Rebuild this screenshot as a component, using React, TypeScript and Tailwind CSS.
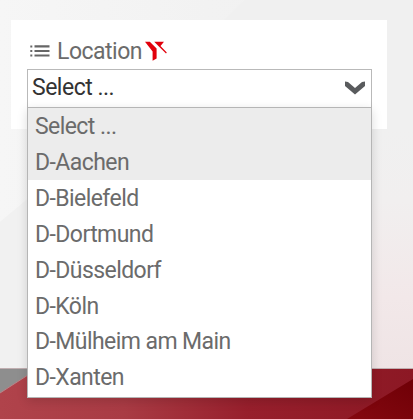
const locations = [
  'Select ...',
  'D-Aachen',
  'D-Bielefeld',
  'D-Dortmund',
  'D-Düsseldorf',
  'D-Köln',
  'D-Mülheim am Main',
  'D-Xanten',
];

function Backdrop() {
  return (
    <svg className="absolute inset-0 h-full w-full" viewBox="0 0 413 419" preserveAspectRatio="none" aria-hidden="true">
      <defs>
        <linearGradient id="wall" x1="0" y1="0" x2="1" y2="0">
          <stop offset="0" stopColor="#f6f6f6" />
          <stop offset="0.5" stopColor="#f2f2f2" />
          <stop offset="1" stopColor="#f0f0f0" />
        </linearGradient>
        <linearGradient id="side" x1="0" y1="0" x2="0" y2="1">
          <stop offset="0" stopColor="#f0f0f0" />
          <stop offset="0.3" stopColor="#f1efef" />
          <stop offset="0.7" stopColor="#f2e8e9" />
          <stop offset="1" stopColor="#efe4e5" />
        </linearGradient>
        <linearGradient id="floor" x1="0" y1="0" x2="1" y2="0">
          <stop offset="0" stopColor="#b0434b" />
          <stop offset="0.3" stopColor="#a93b44" />
          <stop offset="0.6" stopColor="#971f2c" />
          <stop offset="1" stopColor="#8c1824" />
        </linearGradient>
        <linearGradient id="corner" x1="0" y1="1" x2="1" y2="0">
          <stop offset="0" stopColor="#850810" />
          <stop offset="1" stopColor="#6f0006" />
        </linearGradient>
      </defs>
      <rect width="413" height="419" fill="url(#wall)" />
      <path d="M245 0H413V140H100Z" fill="#f0f0f0" />
      <path d="M0 222L50 180V369H0Z" fill="#f1f1f1" />
      <rect x="370" y="129" width="43" height="240" fill="url(#side)" />
      <rect y="369" width="413" height="50" fill="url(#floor)" />
      <path d="M0 369H37L0 393Z" fill="#8e8e8e" />
      <path d="M0 393L28 375" stroke="#b98488" strokeWidth="1" />
      <path d="M413 379L347 419H413Z" fill="url(#corner)" />
      <path d="M0 368.5H413" stroke="#c0aeb0" strokeWidth="1" />
    </svg>
  );
}

function ListIcon() {
  return (
    <svg className="h-3 w-5" viewBox="0 0 20 12" fill="#666" aria-hidden="true">
      <path d="M.3 .5h2v2h-2zM.3 5h2v2h-2zM.3 9.5h2v2h-2zM4.5 .3H19.5v2.1H4.5zM4.5 4.9H19.5v2.1H4.5zM4.5 9.4H19.5v2.1H4.5z" />
    </svg>
  );
}

function FilterOffIcon() {
  return (
    <svg className="h-5 w-[22px]" viewBox="0 0 22 20" aria-hidden="true">
      <path d="M0 .7H4.8L11.6 7.4V17.6L7.6 19.8V10.4Z" fill="#e1000c" />
      <path d="M9.2 .7H19L15.5 5L21.8 11.6L21 12.4L14.4 5.9Z" fill="#e1000c" />
    </svg>
  );
}

export default function App() {
  return (
    <main className="relative h-[419px] w-[413px] overflow-hidden pt-5 pl-[11px] font-['Roboto',sans-serif] text-[23px] text-[#6b6b6b]">
      <Backdrop />
      <section className="relative h-[109px] w-[376px] bg-white pt-4 pl-4">
        <div className="flex h-[33px] items-center pb-[4px] pl-[3px]">
          <ListIcon />
          <span className="ml-[7px] pt-[2px] leading-7 tracking-[-0.5px]">Location</span>
          <span className="ml-[3px]">
            <FilterOffIcon />
          </span>
        </div>
        <div className="relative w-[345px]">
          <button type="button" className="flex h-[39px] w-full items-center justify-between border border-[#b9b9b9] bg-white pr-[6px] pb-px pl-1 text-[#333]">
            <span className="tracking-[-0.5px]">Select ...</span>
            <svg className="h-[14px] w-5" viewBox="0 0 20 14" aria-hidden="true">
              <path d="M0 .5L3 1L10 7L17 1L20 .5V5L10 13.5L0 5Z" fill="#595b5d" />
            </svg>
          </button>
          <ul className="absolute top-[38px] left-0 w-full border border-[#b5b5b5] bg-white pb-[2px] shadow-[0_3px_10px_rgba(0,0,0,0.14)]">
            {locations.map((name, i) => (
              <li
                key={name}
                className={`flex h-[35.9px] items-center pt-[2.4px] pl-[7px] leading-7 tracking-[-0.57px] ${i < 2 ? 'bg-[#ececec]' : ''}`}
              >
                {name}
              </li>
            ))}
          </ul>
        </div>
      </section>
    </main>
  );
}
